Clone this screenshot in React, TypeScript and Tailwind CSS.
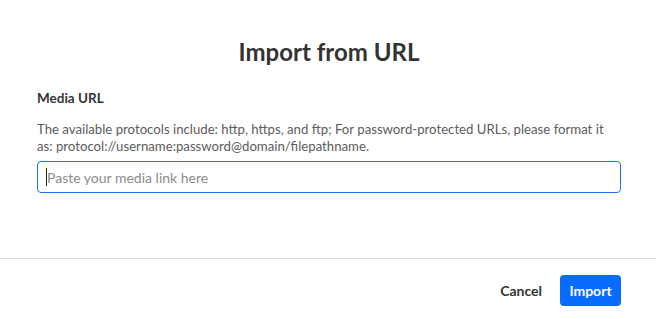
import React, { useState } from 'react';

const App: React.FC = () => {
  const [url, setUrl] = useState<string>('');

  return (
    <div className="w-[656px] h-[319px] bg-white flex flex-col font-['Lato',sans-serif] text-[#333]">
      <div className="h-[258px] pl-[37px] pr-[35px]">
        <h1 className="pt-[36px] text-center text-[24px] leading-[32px] font-bold text-[#333]">Import from URL</h1>
        <label htmlFor="media-url" className="block mt-[20px] text-[13.5px] leading-[20px] font-bold text-[#333]">
          Media URL
        </label>
        <p className="mt-[13px] pr-[8px] text-[13.2px] leading-[17px] text-[#5c5c5c]">
          The available protocols include: http, https, and ftp; For password-protected URLs, please format it
          as: protocol://username:password@domain/filepathname.
        </p>
        <div className="relative mt-[6px]">
          <input
            id="media-url"
            autoFocus
            value={url}
            onChange={(e) => setUrl(e.target.value)}
            placeholder="Paste your media link here"
            className="w-full h-[32px] px-[9px] rounded-[4px] border border-[#1a73f0] text-[14px] text-[#333] placeholder:text-[#8c8c8c] outline-none"
          />
          {url === '' && <span className="absolute left-[9px] top-[7px] w-[1px] h-[18px] bg-[#222]" />}
        </div>
      </div>
      <div className="border-t border-[#dedede] flex-1 flex items-center justify-end gap-[18px] pr-[35px] pt-[3px]">
        <button className="text-[14px] font-bold text-[#333]">Cancel</button>
        <button className="h-[31px] w-[61px] rounded-[4px] bg-[#0a6cff] text-white text-[14px] font-bold">Import</button>
      </div>
    </div>
  );
};

export default App;
